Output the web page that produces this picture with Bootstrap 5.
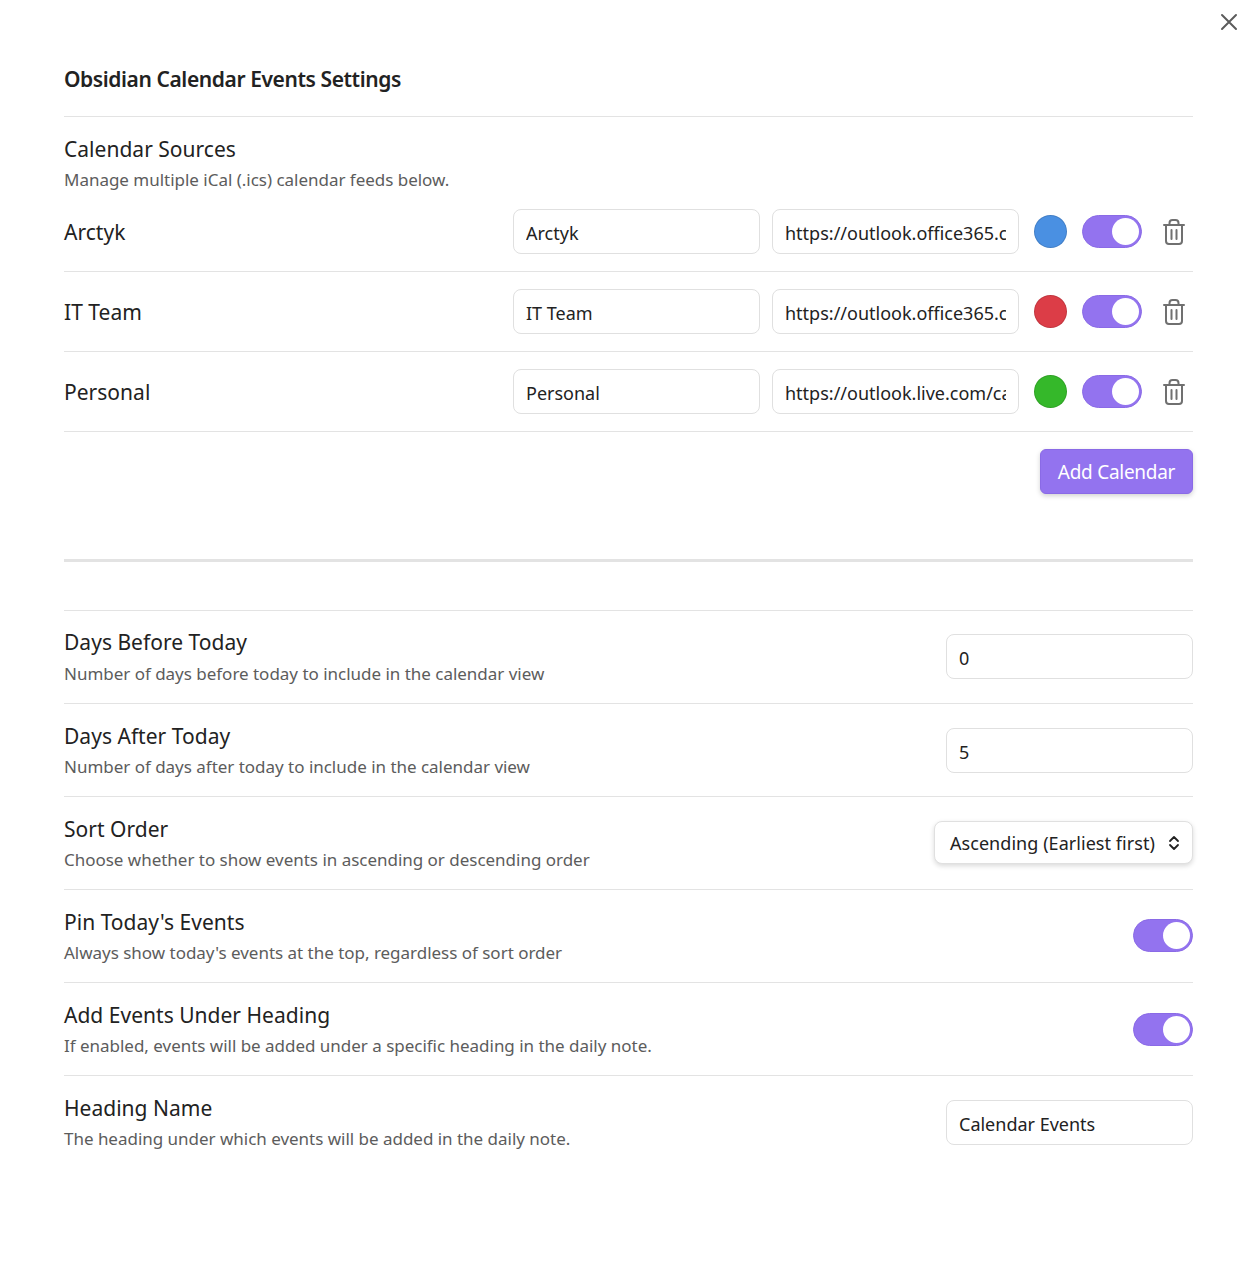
<!DOCTYPE html>
<html lang="en"><head><meta charset="utf-8"><title>Settings</title>
<link href="https://cdn.jsdelivr.net/npm/bootstrap@5.3.0/dist/css/bootstrap.min.css" rel="stylesheet">
<style>
html,body{height:100%;background:#fff}
body{font-family:"Noto Sans","Open Sans",sans-serif;color:#222;overflow:hidden}
.pane{position:relative;height:1271px;padding:0 67px 0 64px}
.closer{position:absolute;top:12px;right:21px;width:20px;height:20px;padding:0;border:0;background:none;display:block}
.closer svg{display:block}
.ttl{height:117px;padding-top:66px;margin:0;font-size:21px;line-height:27px;font-weight:600;letter-spacing:-.41px;color:#222;border-bottom:1px solid #e3e3e3}
.sec-head{padding-top:18px;height:75px}
.sec-head .ds{margin-top:5px}
.nm{font-size:21px;line-height:28px;font-weight:400;color:#222;letter-spacing:.02px}
.ds{font-size:17px;line-height:24px;color:#5c5c5c;letter-spacing:-.02px;margin-top:5px}
.cal-row{height:80px;border-bottom:1px solid #e3e3e3;padding-top:17px;gap:12px}
.cal-row .swatch,.cal-row .tog{margin-top:6px}
.cal-row .nm{padding-top:9px}
.fld{width:247px;height:45px;border:1px solid #e0e0e0;border-radius:8px;padding:2px 12px 0;font:inherit;font-size:18px;color:#222;background:#fff;outline:0;box-shadow:none;flex:none}
.swatch{width:33px;height:33px;border-radius:50%;flex:none;margin:0 3px;border:1px solid rgba(0,0,0,.12)}
.sw-blue{background:#4a90e2}.sw-red{background:#dc3d47}.sw-green{background:#35b82a}
.tog{width:60px;height:33px;border-radius:17px;background:#9373ef;position:relative;flex:none;border:1px solid #8a6ae6}
.tog::after{content:"";position:absolute;right:2px;top:2px;width:27px;height:27px;border-radius:50%;background:#fff}
.bin{flex:none;width:24px;height:26px;margin:10px 7px 0 8px;display:block}
.add-wrap{padding-top:17px;height:130px;border-bottom:3px solid #e3e3e3}
.add-btn{height:45px;width:153px;padding:1px 0 0;border-radius:6px;background:#9373ef;border:1px solid #8a6ae6;color:#fff;font-size:19px;line-height:1;letter-spacing:-.28px;box-shadow:0 2px 5px rgba(0,0,0,.18)}
.add-btn:hover{background:#9373ef;border-color:#8a6ae6;color:#fff}
.gap-top{height:49px;border-bottom:1px solid #e3e3e3}
.set-row{height:93px;border-bottom:1px solid #e3e3e3;padding-top:18px}
.set-row:last-child{border-bottom:0}
.gap-top + .set-row{padding-top:17px}
.gap-top + .set-row .ds{margin-top:6px}
.set-row .fld{margin-top:6px}
.drop{margin-top:6px;width:259px;height:43px;border:1px solid #e0e0e0;border-radius:8px;background:#fff;box-shadow:0 2px 5px rgba(0,0,0,.15);font-size:18px;letter-spacing:.05px;color:#222;padding:2px 11px 0 15px;flex:none}
.drop svg{margin-top:-2px}
.set-row .tog{margin-top:11px}
.set-row .tog-low{margin-top:12px}
</style></head><body>
<main class="pane">
<button class="closer" type="button" aria-label="Close"><svg width="20" height="20" viewBox="0 0 20 20" fill="none" stroke="#5c5c5c" stroke-width="2" stroke-linecap="round"><path d="M3 3l14 14M17 3L3 17"/></svg></button>
<h1 class="ttl">Obsidian Calendar Events Settings</h1>

<div class="sec-head"><div class="nm">Calendar Sources</div><div class="ds">Manage multiple iCal (.ics) calendar feeds below.</div></div>

<div class="cal-row d-flex align-items-start"><div class="nm flex-grow-1">Arctyk</div><input class="fld" value="Arctyk"><input class="fld" value="https://outlook.office365.com/owa/calendar/arctyk"><span class="swatch sw-blue"></span><span class="tog"></span><svg class="bin" viewBox="0 0 24 26" fill="none" stroke="#707070" stroke-width="2" stroke-linecap="round" stroke-linejoin="round"><path d="M2 6h20M4 6v16a3 3 0 0 0 3 3h10a3 3 0 0 0 3-3V6M7.500 6V4a3 3 0 0 1 3-3h3a3 3 0 0 1 3 3v2M9.500 11v9M14.500 11v9"/></svg></div>
<div class="cal-row d-flex align-items-start"><div class="nm flex-grow-1">IT Team</div><input class="fld" value="IT Team"><input class="fld" value="https://outlook.office365.com/owa/calendar/itteam"><span class="swatch sw-red"></span><span class="tog"></span><svg class="bin" viewBox="0 0 24 26" fill="none" stroke="#707070" stroke-width="2" stroke-linecap="round" stroke-linejoin="round"><path d="M2 6h20M4 6v16a3 3 0 0 0 3 3h10a3 3 0 0 0 3-3V6M7.500 6V4a3 3 0 0 1 3-3h3a3 3 0 0 1 3 3v2M9.500 11v9M14.500 11v9"/></svg></div>
<div class="cal-row d-flex align-items-start"><div class="nm flex-grow-1">Personal</div><input class="fld" value="Personal"><input class="fld" value="https://outlook.live.com/calendar/personal"><span class="swatch sw-green"></span><span class="tog"></span><svg class="bin" viewBox="0 0 24 26" fill="none" stroke="#707070" stroke-width="2" stroke-linecap="round" stroke-linejoin="round"><path d="M2 6h20M4 6v16a3 3 0 0 0 3 3h10a3 3 0 0 0 3-3V6M7.500 6V4a3 3 0 0 1 3-3h3a3 3 0 0 1 3 3v2M9.500 11v9M14.500 11v9"/></svg></div>

<div class="add-wrap d-flex justify-content-end align-items-start"><button class="btn add-btn" type="button">Add Calendar</button></div>
<div class="gap-top"></div>

<div class="set-row d-flex justify-content-between align-items-start"><div><div class="nm">Days Before Today</div><div class="ds">Number of days before today to include in the calendar view</div></div><input class="fld" value="0"></div>
<div class="set-row d-flex justify-content-between align-items-start"><div><div class="nm">Days After Today</div><div class="ds">Number of days after today to include in the calendar view</div></div><input class="fld" value="5"></div>
<div class="set-row d-flex justify-content-between align-items-start"><div><div class="nm">Sort Order</div><div class="ds">Choose whether to show events in ascending or descending order</div></div><div class="drop d-flex align-items-center justify-content-between"><span>Ascending (Earliest first)</span><svg width="14" height="18" viewBox="0 0 14 18" fill="none" stroke="#222" stroke-width="1.800" stroke-linecap="round" stroke-linejoin="round"><path d="M3 7l4-4 4 4M3 11l4 4 4-4"/></svg></div></div>
<div class="set-row d-flex justify-content-between align-items-start"><div><div class="nm">Pin Today's Events</div><div class="ds">Always show today's events at the top, regardless of sort order</div></div><span class="tog"></span></div>
<div class="set-row d-flex justify-content-between align-items-start"><div><div class="nm">Add Events Under Heading</div><div class="ds">If enabled, events will be added under a specific heading in the daily note.</div></div><span class="tog tog-low"></span></div>
<div class="set-row d-flex justify-content-between align-items-start"><div><div class="nm">Heading Name</div><div class="ds">The heading under which events will be added in the daily note.</div></div><input class="fld" value="Calendar Events"></div>
</main>
<script src="https://cdn.jsdelivr.net/npm/bootstrap@5.3.0/dist/js/bootstrap.bundle.min.js"></script>
</body></html>
